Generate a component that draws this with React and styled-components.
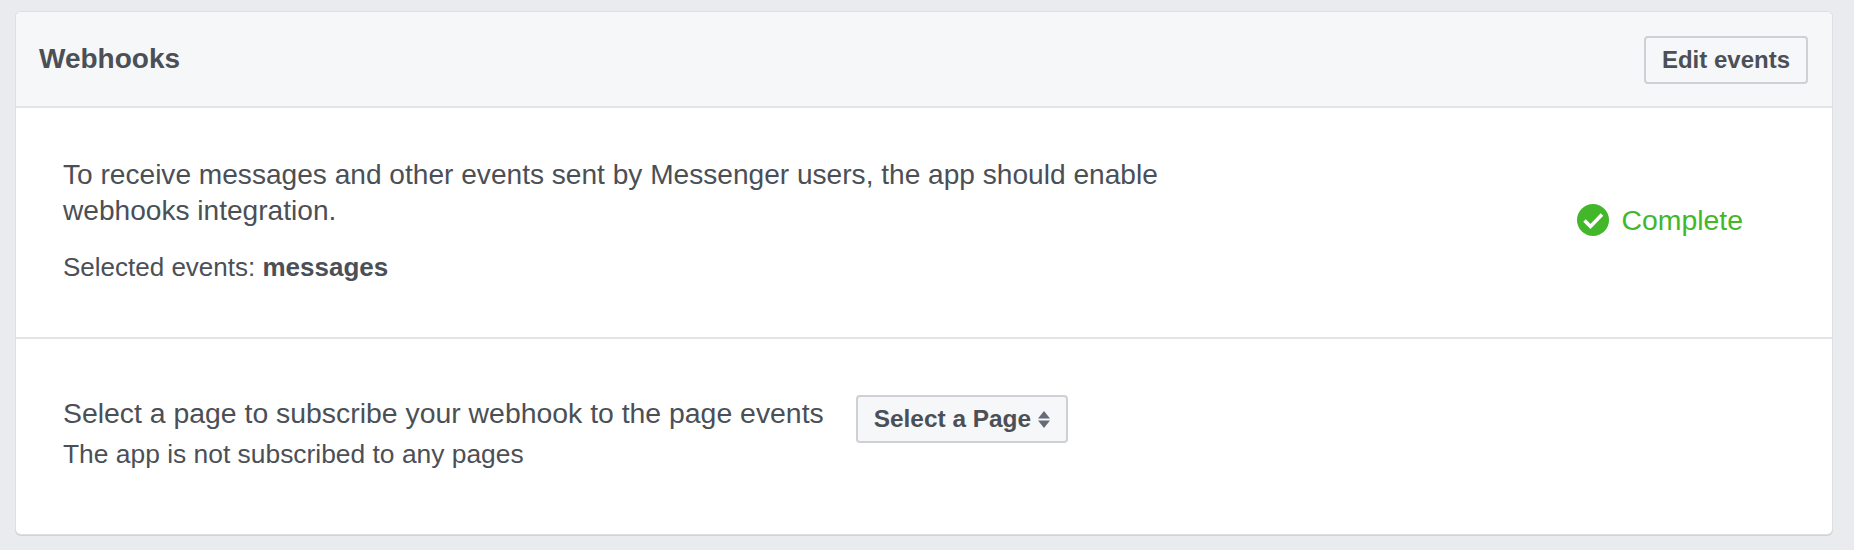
import React from "react";
import styled, { createGlobalStyle } from "styled-components";

const GlobalStyle = createGlobalStyle`
  html, body {
    margin: 0;
    background: #e9ebee;
    font-family: "Liberation Sans", Arial, sans-serif;
    color: #4b4f56;
  }
`;

const Page = styled.div`
  padding: 12px 22px 15px 16px;
  height: 550px;
  box-sizing: border-box;
`;

const Card = styled.div`
  background: #fff;
  border-radius: 5px;
  box-shadow: 0 0 0 1px #dddfe2, 0 1px 0 1px #cfd1d5;
  overflow: hidden;
  height: 522px;
  display: flex;
  flex-direction: column;
`;

const Header = styled.div`
  height: 96px;
  box-sizing: border-box;
  background: #f6f7f9;
  border-bottom: 2px solid #e2e4e8;
  display: flex;
  align-items: center;
  justify-content: space-between;
  padding: 0 24px 0 23px;

  button {
    margin-top: 2px;
  }
`;

const Title = styled.h2`
  margin: 0;
  font-size: 28px;
  font-weight: 700;
`;

const Button = styled.button`
  font-family: inherit;
  font-weight: 700;
  font-size: ${(p) => p.$size || 24}px;
  color: #4b4f56;
  background: #f6f7f9;
  border: 2px solid #ced0d4;
  border-radius: 4px;
  box-sizing: border-box;
  height: 48px;
  padding: 0 16px;
  display: inline-flex;
  align-items: center;
  gap: 7px;
`;

const Section = styled.div`
  display: flex;
  align-items: center;
  justify-content: space-between;
  box-sizing: border-box;
  padding: 0 89px 0 47px;
  height: ${(p) => p.$height}px;
`;

const Divider = styled.div`
  height: 2px;
  background: #e2e4e8;
`;

const Copy = styled.div`
  padding-bottom: ${(p) => p.$lift || 0}px;
`;

const Intro = styled.p`
  margin: 0 0 20px;
  width: 1120px;
  font-size: 28.1px;
  line-height: 36px;
`;

const Lead = styled.div`
  font-size: 28.4px;
  line-height: 36px;
  margin-bottom: 5px;
`;

const Small = styled.p`
  margin: 0;
  font-size: ${(p) => p.$size || 26}px;
  line-height: 36px;
`;

const Status = styled.div`
  display: flex;
  align-items: center;
  gap: 12px;
  padding-bottom: 5px;
  color: #42b72a;
  font-size: 28.4px;
`;

const Subscribe = styled.div`
  display: flex;
  align-items: flex-start;
  gap: 32px;
`;

const Check = () => (
  <svg width="32" height="32" viewBox="0 0 32 32">
    <circle cx="16" cy="16" r="16" fill="#42b72a" />
    <path d="M7.5 16.5l6 6L25 10.5" fill="none" stroke="#fff" strokeWidth="3.6" />
  </svg>
);

const Sort = () => (
  <svg width="12" height="17" viewBox="0 0 12 17">
    <path d="M6 0l6 7.5H0zM0 9.5h12L6 17z" fill="#666b78" />
  </svg>
);

export default function App() {
  return (
    <Page>
      <GlobalStyle />
      <Card>
        <Header>
          <Title>Webhooks</Title>
          <Button>Edit events</Button>
        </Header>
        <Section $height={229}>
          <Copy $lift={3}>
            <Intro>
              To receive messages and other events sent by Messenger users, the
              app should enable webhooks integration.
            </Intro>
            <Small>
              Selected events: <strong>messages</strong>
            </Small>
          </Copy>
          <Status>
            <Check />
            Complete
          </Status>
        </Section>
        <Divider />
        <Section $height={193}>
          <Subscribe>
            <Copy $lift={4}>
              <Lead>Select a page to subscribe your webhook to the page events</Lead>
              <Small $size={26.4}>The app is not subscribed to any pages</Small>
            </Copy>
            <Button $size={24.4}>
              Select a Page
              <Sort />
            </Button>
          </Subscribe>
        </Section>
      </Card>
    </Page>
  );
}
